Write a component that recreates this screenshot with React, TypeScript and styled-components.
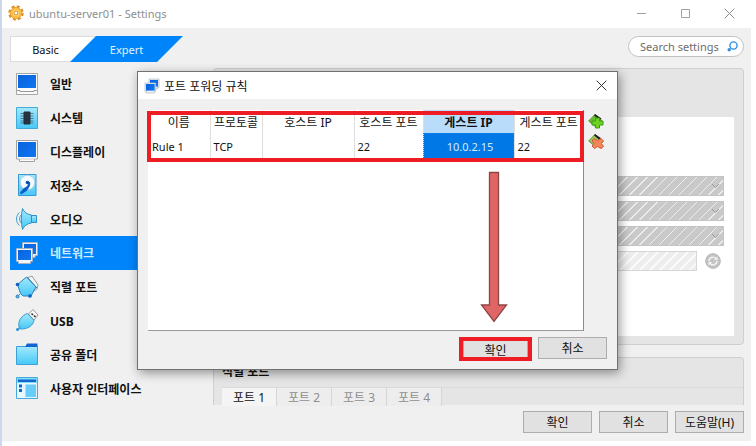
import React from "react";
import styled, { createGlobalStyle } from "styled-components";

const BLUE = "#0084fa";
const RED = "#ee1c25";

const GlobalStyle = createGlobalStyle`
  * { box-sizing: border-box; }
  body { margin: 0; background: #fff; }
  button, input, select, table {
    font: inherit;
    color: inherit;
  }
  button { padding: 0; border: 0; background: none; }
  svg { display: block; flex: none; }
`;

const Desktop = styled.div`
  position: relative;
  min-height: 100vh;
  display: flex;
  padding: 0 5px 5px 0;
  border-left: 2px solid #cbd8ee;
  background: #fff;
  color: #111;
  font-family: "Noto Sans", "Noto Sans CJK KR", sans-serif;
  font-size: 12px;
  line-height: 16px;
`;

const Window = styled.div`
  flex: 1;
  min-width: 0;
  display: flex;
  flex-direction: column;
  background: #f0f0f0;
`;

const TitleBar = styled.header`
  height: 28px;
  flex: none;
  display: flex;
  align-items: center;
  gap: 5px;
  padding: 0 16px 2px 6px;
  background: #fff;
  color: #8e8e8e;
`;

const TitleText = styled.h1<{ $small?: boolean }>`
  flex: 1;
  margin: 0;
  padding-top: 2px;
  font-size: ${(p) => (p.$small ? "11px" : "12px")};
  font-weight: 400;
`;

const Captions = styled.div`
  display: flex;
  gap: 33px;
`;

const TopRow = styled.div`
  flex: none;
  display: flex;
  justify-content: space-between;
  padding: 8px 7px 0 8px;
`;

const ModeTabs = styled.div`
  display: flex;
  height: 26px;
`;

const BasicTab = styled.button`
  width: 86px;
  padding: 2px 16px 0 0;
  border: 1px solid #dcdcdc;
  border-right: 0;
  background: #fff;
  font-size: 11px;
`;

const ExpertTab = styled.button`
  width: 113px;
  margin-left: -26px;
  padding-top: 2px;
  background: ${BLUE};
  color: #e4f3ff;
  clip-path: polygon(26px 0, 100% 0, 87px 100%, 0 100%);
  font-size: 11px;
`;

const SearchBox = styled.label`
  width: 116px;
  height: 21px;
  display: flex;
  align-items: center;
  padding: 0 5px 0 11px;
  border: 1px solid #c2c2c2;
  border-radius: 11px;
  background: #fff;
`;

const SearchInput = styled.input`
  flex: 1;
  min-width: 0;
  padding: 0;
  border: 0;
  outline: 0;
  background: none;
  font-size: 11px;
  &::placeholder { color: #6d6d6d; opacity: 1; }
`;

const Main = styled.div`
  flex: 1;
  display: flex;
  min-height: 0;
  padding: 5px 7px 0 8px;
`;

const Nav = styled.nav`
  width: 196px;
  flex: none;
  display: flex;
  flex-direction: column;
`;

const NavItem = styled.button<{ $active?: boolean }>`
  flex: 1;
  display: flex;
  align-items: center;
  gap: 11px;
  padding-left: 5px;
  text-align: left;
  font-weight: 700;
  background: ${(p) => (p.$active ? BLUE : "transparent")};
  color: ${(p) => (p.$active ? "#cfeaff" : "#111")};
`;

const NavLabel = styled.span`
  padding-top: 3px;
`;

const Content = styled.main`
  flex: 1;
  min-width: 0;
  display: flex;
  flex-direction: column;
  gap: 12px;
  padding: 1px 0 0 7px;
`;

const Group = styled.section<{ $open?: boolean }>`
  display: flex;
  flex-direction: column;
  flex: ${(p) => (p.$open ? "none" : "1")};
  padding: ${(p) => (p.$open ? "6px 0 0 8px" : "48px 9px 8px 8px")};
  height: ${(p) => (p.$open ? "48px" : "auto")};
  border: 1px solid #cfcfcf;
  border-bottom-width: ${(p) => (p.$open ? 0 : "1px")};
  border-radius: ${(p) => (p.$open ? "4px 4px 0 0" : "4px")};
  background: #e5e5e5;
`;

const Page = styled.div`
  flex: 1;
  display: flex;
  flex-direction: column;
  gap: 5px;
  padding: 59px 10px 0 90px;
  background: #fff;
`;

const DisabledSelect = styled.select`
  appearance: none;
  height: 20px;
  width: 100%;
  border: 1px solid #c4c4c4;
  border-radius: 0;
  opacity: 1;
  background: repeating-linear-gradient(135deg, #c9c9c9 0 5px, #ededed 5px 6px, #c9c9c9 6px 7px);
`;

const SelectWrap = styled.div`
  display: grid;
  & > * { grid-area: 1 / 1; }
  & > svg { justify-self: end; align-self: center; margin-right: 4px; }
`;

const MacRow = styled.div`
  display: flex;
  align-items: center;
  gap: 8px;
  padding-right: 3px;
`;

const MacInput = styled.input`
  flex: 1;
  height: 20px;
  border: 1px solid #d6d6d6;
  background: repeating-linear-gradient(135deg, #ededed 0 5px, #fafafa 5px 7px);
`;

const GroupTitle = styled.h2`
  margin: 0 0 7px;
  font-size: 12px;
  line-height: 16px;
  font-weight: 700;
`;

const PortTabs = styled.div`
  display: flex;
  flex: 1;
  border-top: 1px solid #dadada;
`;

const PortTab = styled.button<{ $active?: boolean }>`
  width: 55px;
  padding-top: 2px;
  border-right: 1px solid #d6d6d6;
  background: ${(p) => (p.$active ? "#f4f4f4" : "#ededed")};
  color: ${(p) => (p.$active ? "#111" : "#8f8f8f")};
`;

const Footer = styled.footer<{ $dialog?: boolean }>`
  flex: none;
  display: flex;
  justify-content: flex-end;
  gap: ${(p) => (p.$dialog ? "6px" : "7px")};
  padding: ${(p) => (p.$dialog ? "6px 10px 9px" : "6px 7px 8px")};
`;

const PushButton = styled.button`
  width: 69px;
  height: 22px;
  padding-top: 2px;
  border: 1px solid #adadad;
  background: #e1e1e1;
`;

const Marked = styled.div`
  margin: 0 0 -1px;
  border: 4px solid ${RED};
  height: 24px;
  display: flex;
  & > button { width: 65px; height: 16px; border-width: 0 1px; }
`;

const Dialog = styled.div`
  position: absolute;
  top: 71px;
  bottom: 76px;
  left: 135px;
  right: 138px;
  display: flex;
  flex-direction: column;
  border: 1px solid #717171;
  background: #f0f0f0;
  box-shadow: 2px 3px 10px rgba(0, 0, 0, 0.4);
`;

const DialogTitle = styled.header`
  height: 27px;
  flex: none;
  display: flex;
  align-items: center;
  gap: 4px;
  padding: 0 10px 0 6px;
  background: #fff;
`;

const DialogBody = styled.div`
  flex: 1;
  display: flex;
  gap: 4px;
  padding: 11px 13px 0 10px;
`;

const RuleList = styled.div`
  position: relative;
  flex: 1;
  background: #fff;
  border-right: 1px solid #8d8d8d;
  border-bottom: 1px solid #9b9b9b;
`;

const RuleTable = styled.table`
  width: 100%;
  table-layout: fixed;
  border-collapse: collapse;
`;

const Th = styled.th<{ $width?: number; $active?: boolean }>`
  width: ${(p) => (p.$width ? `${p.$width}px` : "auto")};
  height: 23px;
  padding: 2px 0 0;
  overflow: hidden;
  white-space: nowrap;
  border-right: 1px solid #dedede;
  font-weight: ${(p) => (p.$active ? 700 : 400)};
  background: ${(p) => (p.$active ? "#b9dcfb" : "#fff")};
  &:last-child { border-right: 0; }
`;

const Td = styled.td<{ $active?: boolean }>`
  height: 27px;
  padding: 0 0 0 3px;
  font-size: 11px;
  border-right: 1px solid #dedede;
  text-align: ${(p) => (p.$active ? "center" : "left")};
  background: ${(p) => (p.$active ? "#0078e6" : "#fff")};
  color: ${(p) => (p.$active ? "#d4ecff" : "#111")};
  outline: ${(p) => (p.$active ? "1px dotted #49749c" : "none")};
  outline-offset: -1px;
  &:first-child { padding-left: 4px; }
  &:last-child { border-right: 0; }
`;

const TableMark = styled.div`
  position: absolute;
  top: 1px;
  left: -1px;
  right: -1px;
  height: 51px;
  border: 4px solid ${RED};
  pointer-events: none;
`;

const Arrow = styled.svg`
  position: absolute;
  top: 61px;
  right: 75px;
`;

const Tools = styled.div`
  display: flex;
  flex-direction: column;
  gap: 4px;
  padding-top: 3px;
`;

const Close = ({ color }: { color: string }) => (
  <svg width="11" height="11" viewBox="0 0 11 11" stroke={color} fill="none">
    <path d="M.7.7l9.6 9.6M10.3.7L.7 10.3" />
  </svg>
);

const GearIcon = () => (
  <svg width="16" height="16" viewBox="0 0 16 16">
    <circle cx="8" cy="8" r="6.200" fill="none" stroke="#dc8a22" strokeWidth="3" strokeDasharray="2.7 2.17" />
    <circle cx="8" cy="8" r="5.600" fill="#ffc043" stroke="#eba23a" />
    <circle cx="8" cy="8" r="3" fill="#ffe2a0" />
    <circle cx="8" cy="8" r="2" fill="#fff" stroke="#d98a25" />
  </svg>
);

const Gradients = () => (
  <svg width="0" height="0" aria-hidden="true">
    <defs>
      <linearGradient id="screen" x1="0" y1="0" x2="1" y2="1">
        <stop offset="0" stopColor="#0a62de" />
        <stop offset="1" stopColor="#0f76f0" />
      </linearGradient>
      <linearGradient id="cyan" x1="0" y1="0" x2="0" y2="1">
        <stop offset="0" stopColor="#a5e9fd" />
        <stop offset="1" stopColor="#45c8f6" />
      </linearGradient>
    </defs>
  </svg>
);

const NetworkShape = () => (
  <>
    <path d="M7.500 1.500h15v13H20v2H9.500v-2h-2z" fill="#f2f2f2" stroke="#a3b3c4" />
    <path d="M9 3h12v10H9z" fill="url(#screen)" />
    <path d="M1.500 7.500h16v13h-2v2h-12v-2h-2z" fill="#f4f4f4" stroke="#a3b3c4" />
    <path d="M3 9h13v10H3z" fill="url(#screen)" />
  </>
);

const icons: Record<string, React.ReactNode> = {
  general: (
    <>
      <path d="M1.500 1.500h21v21h-21z" fill="#fafafa" stroke="#a6a6a6" />
      <path d="M3 3h18v13H3z" fill="url(#screen)" />
      <path d="M2 18.500h3v1h14v-1h3" fill="none" stroke="#999" />
    </>
  ),
  system: (
    <>
      <path d="M1.500 1.500h21v21h-21z" fill="url(#cyan)" stroke="#43abd8" />
      <path d="M5.500 7.500h13M5.500 10h13M5.500 12.500h13M5.500 15h13M5.500 17h13" stroke="#4e7f96" />
      <path d="M9 6h6v12H9z" fill="#29333d" stroke="#22303b" />
    </>
  ),
  display: (
    <>
      <path d="M1.500 1.500h21v18.500h-3v2.500h-15V20h-3z" fill="#fafafa" stroke="#a0a0a0" />
      <path d="M3 3h18v15H3z" fill="url(#screen)" />
      <path d="M4.500 20h15" stroke="#ccc" />
    </>
  ),
  storage: (
    <>
      <path d="M3.500 1.500h17.500v21H3.500z" fill="url(#cyan)" stroke="#3796d4" />
      <circle cx="12.500" cy="9.500" r="7.300" fill="#f3fbff" stroke="#a9cfe2" />
      <path d="M15 9c1 3-1 6-3.500 9L6 21.500l-1-2L9 15c3-1 4.500-3 4-6z" fill="#0c5dc9" />
      <circle cx="12.500" cy="9.500" r="1.800" fill="#0b4faf" />
    </>
  ),
  audio: (
    <>
      <path d="M4.500 5.500C.5 9 .5 15 4.500 18.500M6.500 7.500C4 10 4 14 6.500 16.500" fill="none" stroke="#3e9bd4" />
      <path d="M14.500 8.500h7v7h-7z" fill="url(#cyan)" stroke="#2f93c9" />
      <path d="M7.500 1.500C9 5 12 7.500 16.500 8v8c-4.500.5-7.500 3-9 6.500-1.500-6-1.500-15 0-21z" fill="url(#cyan)" stroke="#2f93c9" />
    </>
  ),
  network: <NetworkShape />,
  serial: (
    <>
      <path d="M12 3l5-2 6 9-1 4-3 2z" fill="#f4f4f4" stroke="#999" />
      <path d="M2.500 9.500l9-7.500 9.500 10-5 9h-8l-2.500-2.500z" fill="url(#cyan)" stroke="#2d82bd" />
      <path d="M12 2l10 11M5 19l-3.500 3.500" fill="none" stroke="#2d82bd" />
      <circle cx="2.500" cy="9.500" r="1.800" fill="#0b5dc9" />
      <circle cx="15" cy="21" r="1.800" fill="#0b5dc9" />
      <circle cx="2.500" cy="21.500" r="1.500" fill="#45bcf4" stroke="#2d82bd" />
    </>
  ),
  usb: (
    <>
      <path d="M13.500 6l4.500-4.500 5 5.500-4 5z" fill="#fafafa" stroke="#999" />
      <path d="M16.500 5.500l1.500 1.500M19 7.500l1.500 1.500" stroke="#333" strokeWidth="1.500" />
      <path d="M12.500 5.500l6.500 7c-1 5-6 9-14.500 8.500C2 14 6 7.500 12.500 5.500z" fill="url(#cyan)" stroke="#3e9bc9" />
      <circle cx="2.500" cy="21.500" r="1.500" fill="#2d8fe0" />
      <path d="M3 21l3-3" stroke="#3e9bc9" />
    </>
  ),
  folder: (
    <>
      <path d="M1.500 4.500h21v18h-21z" fill="url(#cyan)" stroke="#3b9fd8" />
      <path d="M10 5l2-3.500h10.500V5z" fill="#1163cf" />
    </>
  ),
  ui: (
    <>
      <path d="M1.500 1.500h21v21h-21z" fill="#e6f7ff" stroke="#45a9dc" />
      <path d="M2 2h20v5H2z" fill="#7fdcfb" />
      <path d="M3 3.500h18V6H3z" fill="#1466cf" />
      <path d="M4 8.500h3v3H4zM4 13h3v3H4z" fill="#1466cf" />
      <path d="M10.500 8.500H21V21H10.500z" fill="#68cdf8" />
    </>
  ),
};

const NavIcon = ({ name }: { name: string }) => (
  <svg width="24" height="24" viewBox="0 0 24 24" aria-hidden="true">
    {icons[name]}
  </svg>
);

const RuleIcon = ({ remove }: { remove?: boolean }) => (
  <svg width="16" height="16" viewBox="0 0 16 16">
    <path d="M.7 8L7 1.500 13.500 7 8 14z" fill={remove ? "#9ccc5b" : "#62bf2c"} stroke="#5d8c3c" />
    <path d="M7 1l6.500 4.500-2 1.500L6 2.500z" fill="#222" />
    {remove ? (
      <path
        d="M6 5.500l3.500 2L13 5.500 15.500 8l-2 2.500 2 3-2.500 2-3.500-2-3 2L4 13l2-2.500-2-2.500z"
        fill="#f1865b"
        stroke="#cf5b38"
      />
    ) : (
      <path d="M7.500 5h4v3H15v4h-3.500v3h-4v-3H4V8h3.500z" fill="#6fd321" stroke="#3b9b1d" />
    )}
  </svg>
);

const Chevron = () => (
  <svg width="9" height="6" viewBox="0 0 9 6" fill="none" stroke="#999">
    <path d="M1 1l3.500 3.500L8 1" />
  </svg>
);

const sections = [
  ["general", "일반"],
  ["system", "시스템"],
  ["display", "디스플레이"],
  ["storage", "저장소"],
  ["audio", "오디오"],
  ["network", "네트워크"],
  ["serial", "직렬 포트"],
  ["usb", "USB"],
  ["folder", "공유 폴더"],
  ["ui", "사용자 인터페이스"],
];

const columns: { label: string; width?: number; value: string; active?: boolean }[] = [
  { label: "이름", width: 62, value: "Rule 1" },
  { label: "프로토콜", width: 52, value: "TCP" },
  { label: "호스트 IP", value: "" },
  { label: "호스트 포트", width: 69, value: "22" },
  { label: "게스트 IP", width: 91, value: "10.0.2.15", active: true },
  { label: "게스트 포트", width: 69, value: "22" },
];

export default function App() {
  return (
    <Desktop>
      <GlobalStyle />
      <Window>
        <TitleBar>
          <GearIcon />
          <TitleText $small>ubuntu-server01 - Settings</TitleText>
          <Captions>
            <button aria-label="Minimize">
              <svg width="11" height="11" viewBox="0 0 11 11" stroke="#a0a0a0">
                <path d="M1 5.500h9" />
              </svg>
            </button>
            <button aria-label="Maximize">
              <svg width="11" height="11" viewBox="0 0 11 11" stroke="#a0a0a0" fill="none">
                <path d="M1.500 1.500h8v8h-8z" />
              </svg>
            </button>
            <button aria-label="Close">
              <Close color="#8d8d8d" />
            </button>
          </Captions>
        </TitleBar>

        <TopRow>
          <ModeTabs>
            <BasicTab>Basic</BasicTab>
            <ExpertTab>Expert</ExpertTab>
          </ModeTabs>
          <SearchBox>
            <SearchInput type="text" aria-label="Search settings" placeholder="Search settings" />
            <svg width="11" height="11" viewBox="0 0 11 11" fill="none">
              <circle cx="6.500" cy="4.500" r="3.600" stroke="#2e8fe0" strokeWidth="1.400" />
              <circle cx="2.200" cy="8.800" r="1.700" fill="#2e8fe0" />
            </svg>
          </SearchBox>
        </TopRow>

        <Main>
          <Nav>
            {sections.map(([name, label]) => (
              <NavItem key={name} $active={name === "network"}>
                <NavIcon name={name} />
                <NavLabel>{label}</NavLabel>
              </NavItem>
            ))}
          </Nav>
          <Content>
            <Group>
              <Page>
                {["Attached to", "Adapter type", "Promiscuous mode"].map((name) => (
                  <SelectWrap key={name}>
                    <DisabledSelect disabled aria-label={name} />
                    <Chevron />
                  </SelectWrap>
                ))}
                <MacRow>
                  <MacInput disabled aria-label="MAC" />
                  <button disabled aria-label="Refresh">
                    <svg width="16" height="16" viewBox="0 0 16 16">
                      <circle cx="8" cy="8" r="7.300" fill="#c4c4c4" stroke="#b4b4b4" />
                      <path d="M4 8a4 4 0 0 1 7-2.500M12 8a4 4 0 0 1-7 2.500" fill="none" stroke="#f4f4f4" strokeWidth="1.400" />
                      <path d="M12.500 3.500v3.500H9zM3.500 12.500V9H7z" fill="#f4f4f4" />
                    </svg>
                  </button>
                </MacRow>
              </Page>
            </Group>
            <Group $open>
              <GroupTitle>직렬 포트</GroupTitle>
              <PortTabs>
                {[1, 2, 3, 4].map((n) => (
                  <PortTab key={n} $active={n === 1}>
                    포트 {n}
                  </PortTab>
                ))}
              </PortTabs>
            </Group>
          </Content>
        </Main>

        <Footer>
          <PushButton>확인</PushButton>
          <PushButton>취소</PushButton>
          <PushButton>도움말(H)</PushButton>
        </Footer>
      </Window>

      <Dialog role="dialog" aria-label="포트 포워딩 규칙">
        <DialogTitle>
          <svg width="16" height="16" viewBox="0 0 24 24">
            <NetworkShape />
          </svg>
          <TitleText>포트 포워딩 규칙</TitleText>
          <button aria-label="닫기">
            <Close color="#333" />
          </button>
        </DialogTitle>
        <DialogBody>
          <RuleList>
            <RuleTable>
              <thead>
                <tr>
                  {columns.map((c) => (
                    <Th key={c.label} $width={c.width} $active={c.active}>
                      {c.label}
                    </Th>
                  ))}
                </tr>
              </thead>
              <tbody>
                <tr>
                  {columns.map((c) => (
                    <Td key={c.label} $active={c.active}>
                      {c.value}
                    </Td>
                  ))}
                </tr>
              </tbody>
            </RuleTable>
            <TableMark />
            <Arrow width="28" height="152" viewBox="0 0 28 152">
              <path
                d="M9.500 1.500h9V134H26.500L14 150.500 1.500 134h8z"
                fill="#e06666"
                stroke="#8c4545"
                strokeWidth="1.300"
              />
            </Arrow>
          </RuleList>
          <Tools>
            <button aria-label="Add rule">
              <RuleIcon />
            </button>
            <button aria-label="Remove rule">
              <RuleIcon remove />
            </button>
          </Tools>
        </DialogBody>
        <Footer $dialog>
          <Marked>
            <PushButton>확인</PushButton>
          </Marked>
          <PushButton>취소</PushButton>
        </Footer>
      </Dialog>
      <Gradients />
    </Desktop>
  );
}
